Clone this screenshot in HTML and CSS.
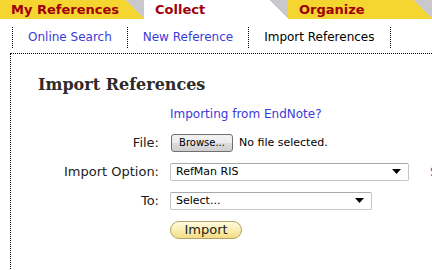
FILE: index.html
```html
<!DOCTYPE html>
<html lang="en">
<head>
    <meta charset="UTF-8">
    <title>Import References</title>
    <link rel="stylesheet" href="styles.css">
</head>
<body>
    <div class="tabs">
        <div class="tab tab-yellow">
            <span class="tab-label">My References</span>
            <span class="tab-corner"></span>
        </div>
        <div class="tab tab-active">
            <span class="tab-label">Collect</span>
            <span class="tab-corner"></span>
        </div>
        <div class="tab tab-yellow">
            <span class="tab-label">Organize</span>
            <span class="tab-corner"></span>
        </div>
    </div>

    <div class="subnav">
        <a href="#">Online Search</a>
        <a href="#">New Reference</a>
        <a href="#" class="current">Import References</a>
    </div>

    <div class="content">
        <h1>Import References</h1>
        <div class="import-form">
            <span></span>
            <div class="field"><a href="#">Importing from EndNote?</a></div>

            <label>File:</label>
            <div class="field">
                <button class="browse-btn">Browse...</button>
                <span class="file-name">No file selected.</span>
            </div>

            <label>Import Option:</label>
            <div class="field">
                <div class="select-box select-wide">
                    <span>RefMan RIS</span>
                    <svg width="9" height="5" viewBox="0 0 9 5"><path d="M0 0h9L4.5 5z" fill="#000"/></svg>
                </div>
                <a href="#" class="side-link">Supported formats</a>
            </div>

            <label>To:</label>
            <div class="field">
                <div class="select-box select-narrow">
                    <span>Select...</span>
                    <svg width="9" height="5" viewBox="0 0 9 5"><path d="M0 0h9L4.5 5z" fill="#000"/></svg>
                </div>
            </div>

            <span></span>
            <div class="field"><button class="import-btn">Import</button></div>
        </div>
    </div>
</body>
</html>
```

FILE: styles.css
```css
html, body {
    overflow: hidden;
}

body {
    margin: 0;
    font-family: "DejaVu Sans", Verdana, sans-serif;
    font-size: 12px;
    color: #000;
    background: #fff;
}

a {
    color: #3b3bd8;
    text-decoration: none;
}

.tabs {
    display: flex;
    height: 19px;
}

.tab {
    display: flex;
}

.tab-label {
    width: 115px;
    padding-left: 11px;
    line-height: 19px;
    font-size: 13px;
    font-weight: bold;
    color: #a0000a;
}

.tab-corner {
    width: 18px;
}

.tab-yellow .tab-label {
    background-color: #f5d530;
}

.tab-yellow .tab-corner {
    background: linear-gradient(to top right, #f5d530 50%, #c9c9cd 50%);
}

.tab-active .tab-label {
    background-color: #fff;
}

.tab-active .tab-corner {
    background: linear-gradient(to top right, #fff 50%, #c9c9cd 50%);
}

.subnav {
    display: flex;
    margin: 8px 0 0 12px;
    height: 21px;
}

.subnav a {
    padding: 0 15px;
    line-height: 21px;
    border-left: 1px dotted #000;
}

.subnav a:last-child {
    border-right: 1px dotted #000;
}

.subnav a.current {
    color: #000;
}

.content {
    margin: 5px 0 0 10px;
    padding-left: 27px;
    height: 215px;
    border-top: 1px dotted #000;
    border-left: 1px dotted #000;
}

h1 {
    margin: 21px 0 9px 0;
    font-family: "DejaVu Serif", Georgia, serif;
    font-size: 16px;
    line-height: 20px;
    color: #2e2b28;
}

.import-form {
    display: grid;
    grid-template-columns: 121px auto;
    grid-auto-rows: 19px;
    column-gap: 11px;
    row-gap: 10px;
    align-items: center;
}

.import-form label {
    text-align: right;
    font-size: 13px;
    color: #222;
}

.field {
    display: flex;
    align-items: center;
    white-space: nowrap;
}

.browse-btn {
    width: 62px;
    height: 18px;
    margin-left: 1px;
    padding: 0;
    font-family: inherit;
    font-size: 10px;
    color: #000;
    border: 1px solid #707070;
    border-radius: 3px;
    background: linear-gradient(#f2f2f2, #ebebeb 50%, #dddddd 50%, #cfcfcf);
}

.file-name {
    margin-left: 6px;
    font-size: 11px;
}

.select-box {
    display: flex;
    align-items: center;
    justify-content: space-between;
    box-sizing: border-box;
    height: 18px;
    padding: 0 7px 0 5px;
    font-size: 11px;
    border: 1px solid #c5c5c5;
    border-top-color: #a9a9a9;
    border-radius: 2px;
    background: #fff;
}

.select-wide {
    width: 239px;
}

.select-narrow {
    width: 202px;
}

.side-link {
    margin-left: 21px;
    font-size: 12px;
    color: #6b4cc8;
}

.import-btn {
    box-sizing: border-box;
    width: 72px;
    height: 18px;
    padding: 0;
    font-family: inherit;
    font-size: 13px;
    color: #222;
    border: 1px solid #b3a468;
    border-radius: 9px;
    background: linear-gradient(#fffbe0, #fbeeb0 50%, #f2dc86);
}
```
